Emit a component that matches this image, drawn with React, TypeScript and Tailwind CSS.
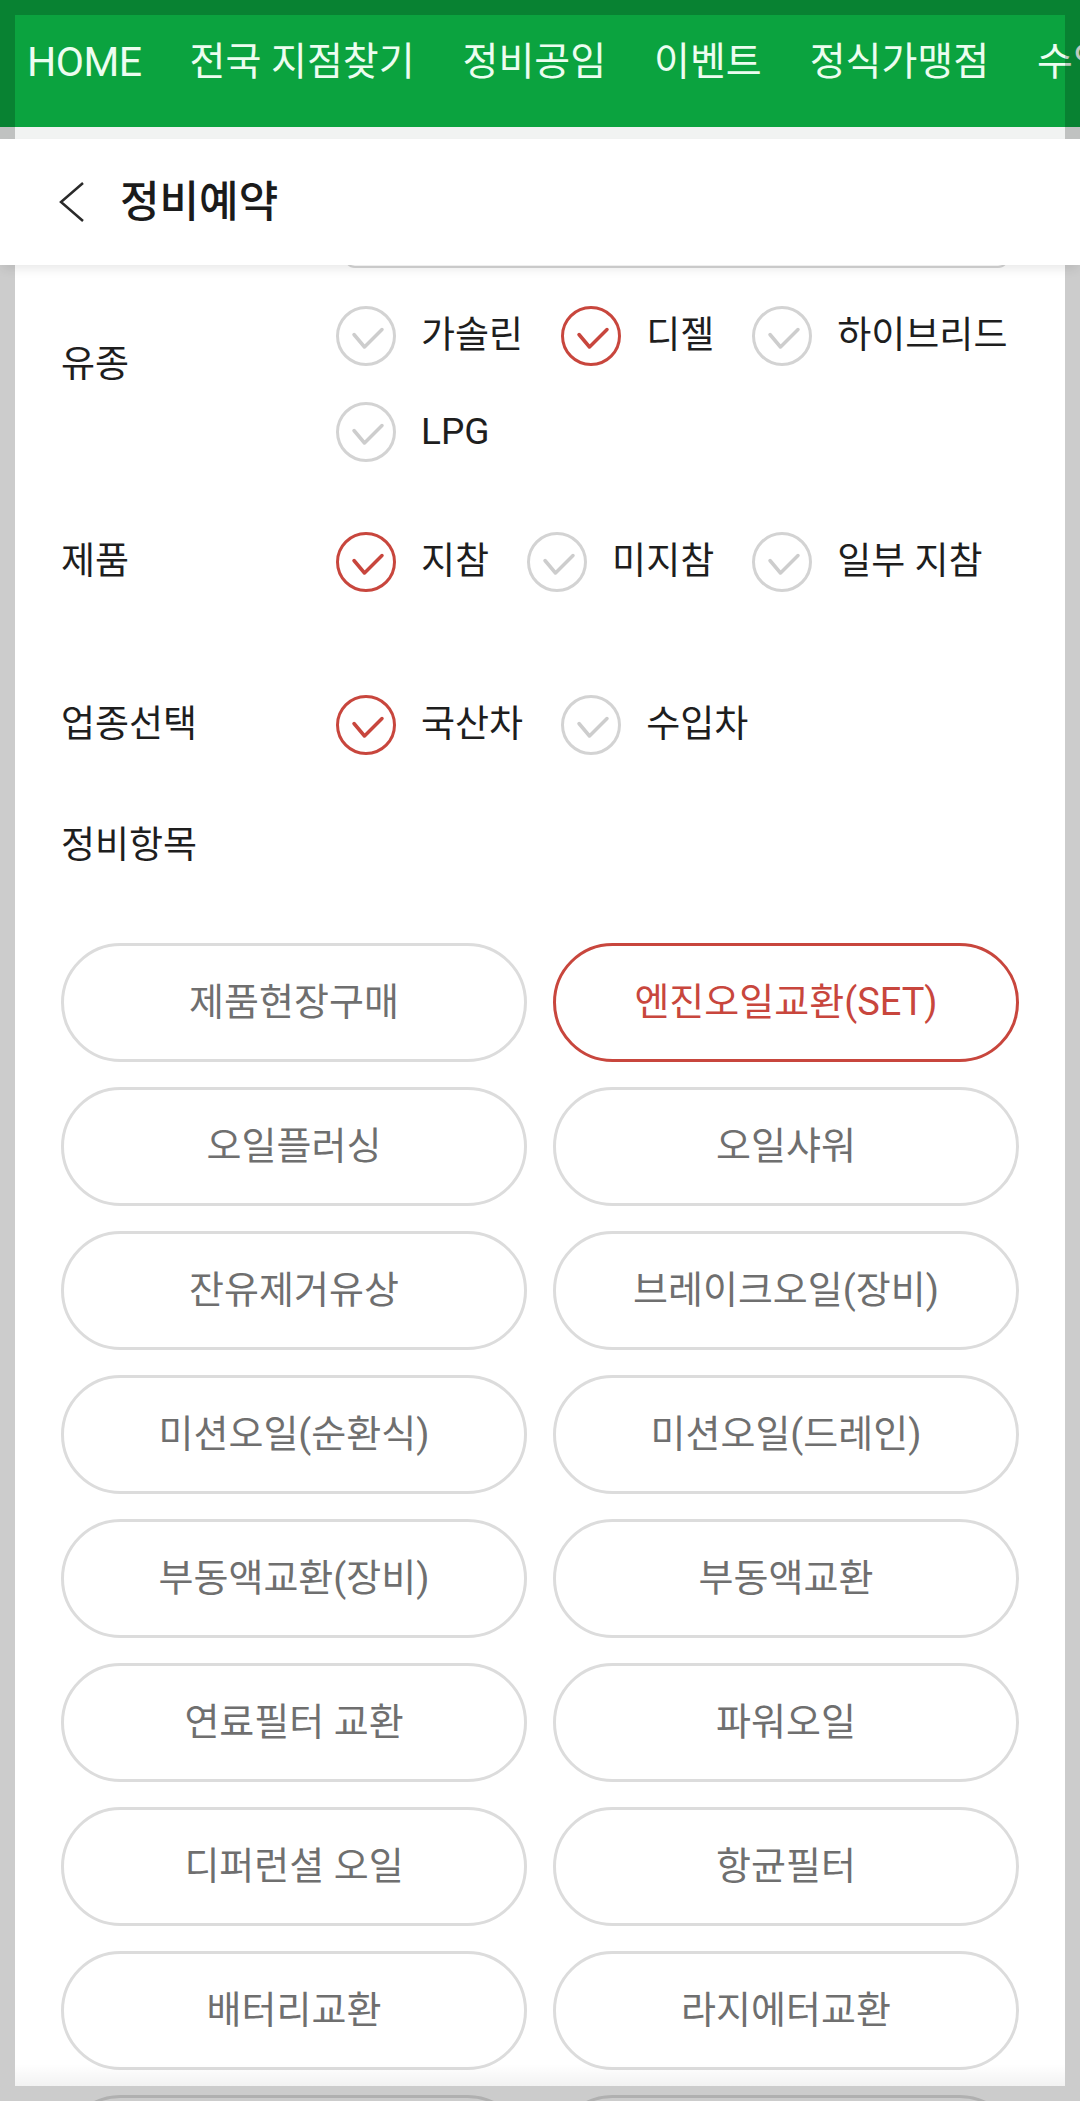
import React from 'react';

const NAV_ITEMS = [
  { label: 'HOME', latin: true },
  { label: '전국 지점찾기' },
  { label: '정비공임' },
  { label: '이벤트' },
  { label: '정식가맹점' },
  { label: '수입차정비' },
];

const FUEL = [
  { label: '가솔린', checked: false },
  { label: '디젤', checked: true },
  { label: '하이브리드', checked: false },
  { label: 'LPG', checked: false },
];

const PRODUCT = [
  { label: '지참', checked: true },
  { label: '미지참', checked: false },
  { label: '일부 지참', checked: false },
];

const CAR_TYPE = [
  { label: '국산차', checked: true },
  { label: '수입차', checked: false },
];

const SERVICES = [
  { label: '제품현장구매', selected: false },
  { label: '엔진오일교환(SET)', selected: true },
  { label: '오일플러싱', selected: false },
  { label: '오일샤워', selected: false },
  { label: '잔유제거유상', selected: false },
  { label: '브레이크오일(장비)', selected: false },
  { label: '미션오일(순환식)', selected: false },
  { label: '미션오일(드레인)', selected: false },
  { label: '부동액교환(장비)', selected: false },
  { label: '부동액교환', selected: false },
  { label: '연료필터 교환', selected: false },
  { label: '파워오일', selected: false },
  { label: '디퍼런셜 오일', selected: false },
  { label: '항균필터', selected: false },
  { label: '배터리교환', selected: false },
  { label: '라지에터교환', selected: false },
  { label: '타이어교환', selected: false },
  { label: '얼라인먼트', selected: false },
];

function CheckCircle({ checked }: { checked: boolean }) {
  const ring = checked ? '#c8463d' : '#d3d3d3';
  const mark = checked ? '#c8463d' : '#cdcdcd';
  return (
    <svg width="60" height="60" viewBox="0 0 60 60" className="shrink-0">
      <circle cx="30" cy="30" r="28.5" fill="none" stroke={ring} strokeWidth="3" />
      <polyline
        points="18,28.5 28.5,41 46,23.5"
        fill="none"
        stroke={mark}
        strokeWidth="3.5"
        strokeLinecap="round"
        strokeLinejoin="round"
      />
    </svg>
  );
}

interface OptionRowProps {
  title: string;
  options: { label: string; checked: boolean }[];
  className?: string;
  labelClassName?: string;
}

function OptionRow({ title, options, className = '', labelClassName = '' }: OptionRowProps) {
  return (
    <div className={`flex items-start ${className}`}>
      <div className={`flex h-[60px] w-[275px] shrink-0 items-center text-[37px] text-[#1e1e1e] ${labelClassName}`}>
        {title}
      </div>
      <div className="flex flex-1 flex-wrap gap-x-[38px] gap-y-[36px]">
        {options.map((opt) => (
          <label key={opt.label} className="flex h-[60px] items-center gap-[25px]">
            <CheckCircle checked={opt.checked} />
            <span className="whitespace-nowrap text-[37px] text-[#1e1e1e]">{opt.label}</span>
          </label>
        ))}
      </div>
    </div>
  );
}

export default function App() {
  return (
    <div className="relative h-[2101px] w-[1080px] overflow-hidden bg-white font-[Roboto,'Noto_Sans_CJK_KR',sans-serif]">
      {/* top navigation */}
      <nav className="flex h-[127px] items-center gap-[48px] overflow-hidden whitespace-nowrap bg-[#0ba33f] px-[27px] pb-[2px]">
        {NAV_ITEMS.map((item) => (
          <span
            key={item.label}
            className={
              item.latin
                ? 'text-[41px] tracking-[-0.5px] text-[#ecfdf0]'
                : 'text-[39px] text-[#ecfdf0]'
            }
          >
            {item.label}
          </span>
        ))}
      </nav>
      <div className="h-[12px] bg-[#f1f3f2]" />

      {/* page header */}
      <header className="relative z-10 flex h-[126px] items-center gap-[35px] bg-white pl-[59px] shadow-[0_6px_10px_-2px_rgba(0,0,0,0.09)]">
        <svg width="26" height="42" viewBox="0 0 26 42">
          <polyline
            points="24,2 2,21 24,40"
            fill="none"
            stroke="#2a2a2a"
            strokeWidth="2.5"
            strokeLinejoin="miter"
          />
        </svg>
        <h1 className="text-[43px] font-medium text-[#1b1b1b]">정비예약</h1>
      </header>

      <main className="px-[61px]">
        {/* bottom of the field scrolled under the header */}
        <div className="-mt-[8px] ml-[283px] h-[11px] w-[665px] rounded-b-[12px] border-[2px] border-t-0 border-[#d6d6d6]" />

        <OptionRow title="유종" options={FUEL} className="mt-[38px]" labelClassName="mt-[29px]" />
        <OptionRow title="제품" options={PRODUCT} className="mt-[70px]" />
        <OptionRow title="업종선택" options={CAR_TYPE} className="mt-[103px]" />

        <div className="mt-[61px] flex h-[60px] items-center text-[37px] text-[#1e1e1e]">
          정비항목
        </div>

        <div className="mt-[67px] grid grid-cols-2 gap-x-[26px] gap-y-[25px]">
          {SERVICES.map((s) => (
            <button
              key={s.label}
              type="button"
              className={
                s.selected
                  ? 'h-[119px] rounded-full border-[3px] border-[#c8463d] bg-white text-[38px] text-[#c8463d]'
                  : 'h-[119px] rounded-full border-[3px] border-[#dcdcdc] bg-white text-[38px] text-[#6f6f6f]'
              }
            >
              {s.label}
            </button>
          ))}
        </div>
      </main>

      {/* dimmed frame around the sheet */}
      <div className="pointer-events-none absolute inset-0 border-[15px] border-black/20" />
      <div className="pointer-events-none absolute bottom-[15px] left-[15px] right-[15px] h-[22px] bg-[linear-gradient(to_bottom,rgba(0,0,0,0),rgba(0,0,0,0.05))]" />
    </div>
  );
}
